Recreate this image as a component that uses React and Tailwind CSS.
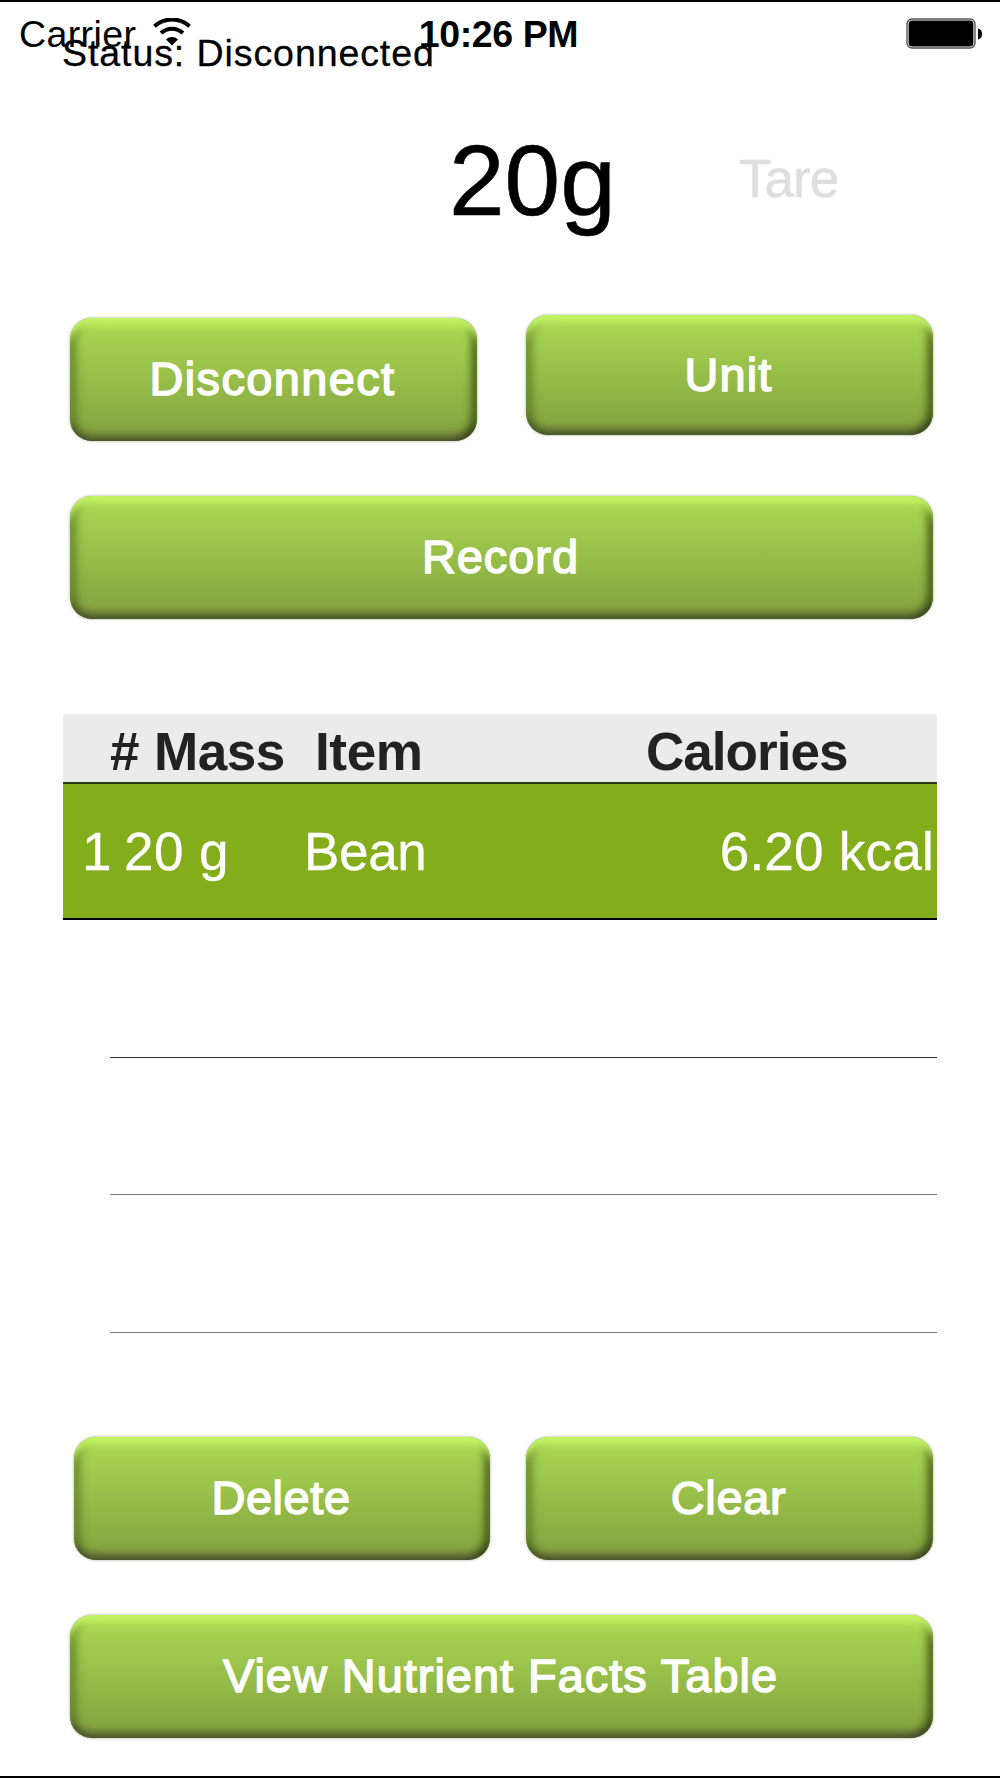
import React from 'react';

const rows = [
  { id: 1, mass: '20 g', item: 'Bean', calories: '6.20 kcal' }
];

const GlossyButton = ({ label, className }) => (
  <button
    className={`flex items-center justify-center rounded-[22px] bg-gradient-to-b from-[#acdb54] to-[#82a13e] pr-[2px] text-[46.9px] leading-none text-white [-webkit-text-stroke:1.5px_white] shadow-[0_0_3px_rgba(70,90,30,0.5),inset_0_10px_7px_-3px_#c3f564,inset_0_-10px_9px_-4px_rgba(60,60,45,0.6),inset_-9px_-3px_9px_-4px_rgba(35,50,5,0.75),inset_10px_0_10px_-4px_rgba(70,95,25,0.6)] ${className}`}
  >
    {label}
  </button>
);

const WifiIcon = () => (
  <svg width="38" height="28" viewBox="0 0 38 28" fill="none" stroke="#000">
    <path d="M1.5 8.2C11.5 -0.8 26.5 -0.8 36.5 8.2" strokeWidth="4" />
    <path d="M8 15C14.5 9.2 23.5 9.2 30 15" strokeWidth="4" />
    <path d="M13 21.5C16.5 18.2 21.5 18.2 25 21.5L19 27.5Z" fill="#000" stroke="none" />
  </svg>
);

const BatteryIcon = () => (
  <svg width="78" height="32" viewBox="0 0 78 32">
    <rect x="1" y="1" width="68" height="29" rx="5" fill="#fff" stroke="#555" strokeWidth="1.4" />
    <rect x="2.6" y="2.6" width="64.8" height="25.8" rx="3.5" fill="#000" />
    <path d="M72 10.5C77.5 11.5 77.5 20.5 72 21.5Z" fill="#000" />
  </svg>
);

const StatusBar = () => (
  <div className="flex h-16 items-center justify-between pl-[19px] pr-[16px] text-[37.5px]">
    <div className="flex flex-1 items-center gap-[17px]">
      <span className="tracking-[0.4px]">Carrier</span>
      <div className="-mt-1"><WifiIcon /></div>
    </div>
    <div className="pr-[6px] font-bold tracking-[-0.4px] whitespace-nowrap">10:26 PM</div>
    <div className="flex flex-1 justify-end"><BatteryIcon /></div>
  </div>
);

const RecordTable = () => (
  <div className="mx-[63px] mt-[95px] text-[53.1px] leading-none">
    <div className="flex h-[68px] items-center bg-[#ebebeb] pt-[7px] font-bold text-[#222]">
      <div className="w-[91px] pl-[47px]">#</div>
      <div className="w-[161px] tracking-[-0.5px]">Mass</div>
      <div className="w-[331px] tracking-[-0.4px]">Item</div>
      <div className="tracking-[-1px]">Calories</div>
    </div>
    {rows.map((row) => (
      <div
        key={row.id}
        className="flex h-[138px] items-center border-t-2 border-b-2 border-t-[#2c3a1c] border-b-black bg-[#83ad1b] pt-[2px] text-white [-webkit-text-stroke:0.3px_white]"
      >
        <div className="w-[61px] pl-[19px]">{row.id}</div>
        <div className="w-[180px] tracking-[0.4px]">{row.mass}</div>
        <div className="flex-1 tracking-[-0.4px]">{row.item}</div>
        <div className="pr-[3px] tracking-[0.2px]">{row.calories}</div>
      </div>
    ))}
    {/* empty rows */}
    <div className="ml-[47px] h-[138px] border-b border-[#333]"></div>
    <div className="ml-[47px] h-[137px] border-b border-[#777]"></div>
    <div className="ml-[47px] h-[138px] border-b border-[#777]"></div>
  </div>
);

const App = () => {
  return (
    <div className="relative h-[1778px] w-[1000px] overflow-hidden border-y-2 border-black bg-white font-['Liberation_Sans',Arial,sans-serif] text-black">
      <StatusBar />
      {/* connection label runs under the status bar */}
      <div className="absolute left-[62px] top-[29px] text-[37.5px] leading-[44px] tracking-[0.92px] [-webkit-text-stroke:0.3px_black]">
        Status: Disconnected
      </div>

      <div className="flex h-[229px] items-center pl-[449px]">
        <div className="-mt-[2px] w-[290px] text-[100px] leading-none [-webkit-text-stroke:0.6px_black]">20g</div>
        <div className="-mt-[3px] text-[53.1px] leading-none tracking-[-1px] text-[#dedede] [-webkit-text-stroke:0.5px_#dedede]">Tare</div>
      </div>

      <div className="mt-5 flex items-start justify-between pl-[70px] pr-[67px]">
        <GlossyButton label="Disconnect" className="mt-[3px] h-[123px] w-[407px] tracking-[1.4px]" />
        <GlossyButton label="Unit" className="h-[120px] w-[407px] tracking-[1.1px]" />
      </div>
      <div className="mt-[55px] pl-[70px] pr-[67px]">
        <GlossyButton label="Record" className="h-[123px] w-full tracking-[1px]" />
      </div>

      <RecordTable />

      <div className="mt-[104px] flex justify-between pl-[74px] pr-[67px]">
        <GlossyButton label="Delete" className="h-[123px] w-[416px] tracking-[0.6px]" />
        <GlossyButton label="Clear" className="h-[123px] w-[407px] tracking-[0.7px]" />
      </div>
      <div className="mt-[55px] pl-[70px] pr-[67px]">
        <GlossyButton label="View Nutrient Facts Table" className="h-[123px] w-full tracking-[1px]" />
      </div>
    </div>
  );
};

export default App;
